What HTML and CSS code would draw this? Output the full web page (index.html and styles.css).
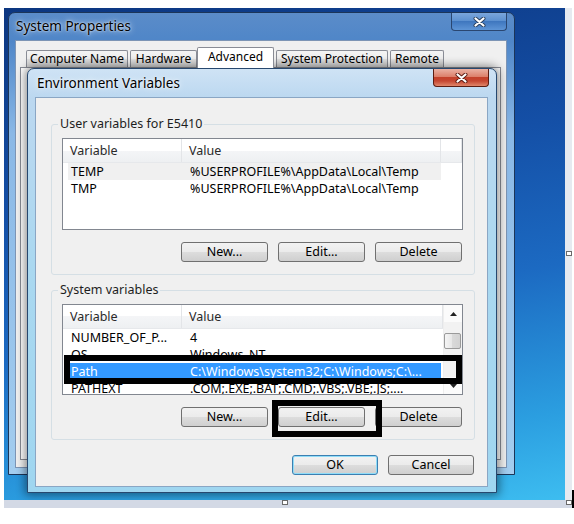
FILE: index.html
```html
<!DOCTYPE html>
<html>
<head>
<meta charset="utf-8">
<title>Environment Variables</title>
<link rel="stylesheet" href="styles.css">
</head>
<body>
<div class="page">
  <div class="screen">
    <div class="desktop">
      <div class="win sysprops">
        <div class="titlebar">
          <span class="wtitle">System Properties</span>
          <span class="close inactive"><svg width="13" height="10" viewBox="0 0 13 10"><path d="M2.5 1.5 L10.5 8.5 M10.5 1.5 L2.5 8.5" stroke="#2a3f5c" stroke-width="4" stroke-linecap="round"/><path d="M2.5 1.5 L10.5 8.5 M10.5 1.5 L2.5 8.5" stroke="#fff" stroke-width="2.2" stroke-linecap="round"/></svg></span>
        </div>
        <div class="sbody">
          <div class="tabs">
            <span class="tab t-cn">Computer Name</span>
            <span class="tab t-hw">Hardware</span>
            <span class="tab sel t-adv">Advanced</span>
            <span class="tab t-sp">System Protection</span>
            <span class="tab t-rm">Remote</span>
          </div>
          <div class="tabpage"></div>
        </div>
      </div>

      <div class="win envvars">
        <div class="titlebar etitle">
          <span class="wtitle">Environment Variables</span>
          <span class="close red"><svg width="13" height="10" viewBox="0 0 13 10"><path d="M2.5 1.5 L10.5 8.5 M10.5 1.5 L2.5 8.5" stroke="#5a1a10" stroke-width="4" stroke-linecap="round"/><path d="M2.5 1.5 L10.5 8.5 M10.5 1.5 L2.5 8.5" stroke="#fff" stroke-width="2.2" stroke-linecap="round"/></svg></span>
        </div>
        <div class="ebody">
          <fieldset class="group">
            <legend>User variables for E5410</legend>
            <div class="list ulist">
              <div class="lhead uhead"><span>Variable</span><span>Value</span><span></span></div>
              <div class="row hover"><span>TEMP</span><span>%USERPROFILE%\AppData\Local\Temp</span></div>
              <div class="row"><span>TMP</span><span>%USERPROFILE%\AppData\Local\Temp</span></div>
            </div>
            <div class="btns">
              <button class="btn">New...</button>
              <button class="btn">Edit...</button>
              <button class="btn">Delete</button>
            </div>
          </fieldset>

          <fieldset class="group sysgroup">
            <legend>System variables</legend>
            <div class="list slist">
              <div class="lmain">
                <div class="lhead shead"><span>Variable</span><span>Value</span></div>
                <div class="row"><span>NUMBER_OF_P...</span><span>4</span></div>
                <div class="row"><span>OS</span><span>Windows_NT</span></div>
                <div class="row sel"><span>Path</span><span>C:\Windows\system32;C:\Windows;C:\...</span></div>
                <div class="row"><span>PATHEXT</span><span>.COM;.EXE;.BAT;.CMD;.VBS;.VBE;.JS;....</span></div>
              </div>
              <div class="vscroll">
                <div class="arrow"><svg width="7" height="4" viewBox="0 0 7 4"><path d="M0 4 L3.5 0 L7 4 Z" fill="#222"/></svg></div>
                <div class="thumb"></div>
                <div class="arrow down"><svg width="7" height="4" viewBox="0 0 7 4"><path d="M0 0 L3.5 4 L7 0 Z" fill="#222"/></svg></div>
              </div>
            </div>
            <div class="btns">
              <button class="btn">New...</button>
              <button class="btn">Edit...</button>
              <button class="btn">Delete</button>
            </div>
          </fieldset>

          <div class="btns okrow">
            <button class="btn ok">OK</button>
            <button class="btn cancel">Cancel</button>
          </div>

          <div class="mark mark-path"></div>
          <div class="mark mark-edit"></div>
        </div>
      </div>
    </div>
    <div class="edge"></div>
    <div class="taskbar"></div>
  </div>
  <span class="handle h1"></span>
  <span class="handle h2"></span>
  <span class="handle h3"></span>
  <span class="caret"></span>
</div>
</body>
</html>
```

FILE: styles.css
```css
* { box-sizing: border-box; }

body {
  margin: 0;
  background-color: #ffffff;
  font-family: "Noto Sans", "Open Sans", sans-serif;
  font-size: 12.5px;
  color: #000000;
}

.page {
  position: relative;
  width: 574px;
  height: 524px;
  padding: 8px 0 0 4px;
}

.screen {
  display: grid;
  grid-template-columns: 561px 7px;
  grid-template-rows: 492px 8px;
  width: 568px;
  height: 500px;
  background-color: #1d64bd;
}

.desktop {
  position: relative;
  width: 561px;
  height: 492px;
  overflow: hidden;
  background-color: #1d64bd;
  box-shadow: inset 0 0 0 300px #1d64bd;
}

.desktop::before {
  content: "";
  position: absolute;
  left: 0;
  top: 0;
  width: 561px;
  height: 492px;
  background-image: linear-gradient(170deg, #0c3680 0%, #144fa6 35%, #1c6ac2 60%, #2b9ee0 85%, #3dbdf0 100%);
}

.edge {
  background-color: #e6eaf0;
}

.taskbar {
  grid-column: 1 / span 2;
  background-color: #d3d9e5;
}

/* windows */
.win {
  position: absolute;
  display: flex;
  flex-direction: column;
}

.titlebar {
  display: flex;
  justify-content: space-between;
  align-items: flex-start;
}

.wtitle {
  font-size: 13.5px;
  line-height: 16px;
  text-shadow: 0 0 6px rgba(255, 255, 255, 0.9), 0 0 2px rgba(255, 255, 255, 0.9);
}

.close {
  width: 56px;
  height: 18px;
  display: flex;
  align-items: center;
  justify-content: center;
  border-radius: 0 0 4px 4px;
}

.close.inactive {
  border: 1px solid #2a4670;
  border-top: none;
  background-color: #5a8fcf;
  background-image: linear-gradient(#7aa6dc, #5a8fcf 50%, #3f77bf 50%, #5e95d6);
}

.close.red {
  border: 1px solid #5c1d12;
  border-top: none;
  background-color: #c84a34;
  background-image: linear-gradient(#eab1a3 0%, #dc806b 45%, #c3412b 50%, #c54631 70%, #e0866a 100%);
}

/* System Properties */
.sysprops {
  left: 4px;
  top: 4px;
  width: 507px;
  height: 463px;
  border: 1px solid #1c3558;
  border-radius: 7px 7px 0 0;
  background-color: #6d9fd8;
  background-image: linear-gradient(180deg, #5b8cc9 0px, #4f86c8 28px, #8ab8e6 120px, #a3cdef 100%);
}

.sysprops .titlebar {
  height: 27px;
  padding-left: 7px;
  padding-right: 7px;
}

.sysprops .wtitle {
  margin-top: 5px;
}

.sbody {
  margin: 0 7px 6px 6px;
  height: 428px;
  background-color: #f0f0f0;
  border: 1px solid #7d95b5;
  padding-top: 6px;
  display: flex;
  flex-direction: column;
}

.tabs {
  display: flex;
  align-items: flex-end;
  height: 21px;
  padding-left: 10px;
}

.tab {
  height: 18px;
  border: 1px solid #898c95;
  border-bottom: none;
  border-radius: 2px 2px 0 0;
  background-color: #e4e4e4;
  background-image: linear-gradient(#f4f4f4, #ececec 50%, #dedede 50%, #d2d2d2);
  text-align: center;
  line-height: 16px;
  font-size: 12px;
  margin-right: 2px;
  white-space: nowrap;
}

.tab.sel {
  position: relative;
  z-index: 1;
  height: 21px;
  background-image: none;
  background-color: #ffffff;
  margin-left: -2px;
  margin-right: 2px;
  line-height: 18px;
}

.t-cn { width: 102px; }
.t-hw { width: 67px; }
.t-adv { width: 77px; }
.t-sp { width: 112px; }
.t-rm { width: 54px; }

.tabpage {
  flex: 1;
  margin: -1px 5px 7px 4px;
  background-color: #ffffff;
  border: 1px solid #898c95;
}

/* Environment Variables */
.envvars {
  left: 23px;
  top: 60px;
  width: 470px;
  height: 425px;
  border: 1px solid #27486f;
  border-radius: 7px 7px 0 0;
  background-color: #b4d9f1;
  background-image: linear-gradient(180deg, #cfe3f5 0px, #bcd8f0 28px, #aad8f0 200px, #9fd6f0 100%);
  box-shadow: 0 0 10px 2px rgba(0, 0, 0, 0.45);
}

.etitle {
  height: 28px;
  padding-left: 9px;
  padding-right: 7px;
}

.etitle .wtitle {
  margin-top: 6px;
}

.ebody {
  position: relative;
  margin: 0 8px 5px 7px;
  height: 390px;
  background-color: #f0f0f0;
  border: 1px solid #8aa6c4;
  padding: 18px 12px 0 15px;
}

.group {
  margin: 0;
  min-width: 0;
  border: 1px solid #d5dfe5;
  border-radius: 3px;
  padding: 6px 11px 12px 10px;
}

.group legend {
  padding: 0 2px;
  margin-left: -4px;
  line-height: 16px;
  font-size: 12.5px;
  color: #1e1e1e;
}

.sysgroup {
  margin-top: 7px;
}

.list {
  border: 1px solid #828790;
  background-color: #ffffff;
  overflow: hidden;
}

.ulist {
  height: 92px;
}

.slist {
  height: 91px;
  display: flex;
}

.lmain {
  flex: 1;
  min-width: 0;
}

.lhead {
  display: grid;
  height: 24px;
  background-color: #f7f8f9;
  background-image: linear-gradient(#ffffff 0%, #ffffff 50%, #f4f5f7 50%, #eef0f2 100%);
  border-bottom: 1px solid #e6e8eb;
}

.uhead { grid-template-columns: 119px 259px 1fr; }
.shead { grid-template-columns: 119px 1fr; }

.lhead span {
  line-height: 23px;
  padding-left: 7px;
  border-right: 1px solid #e3e5e8;
  color: #2a2a2a;
}

.row {
  display: grid;
  grid-template-columns: 113px 1fr;
  height: 17px;
  margin-left: 5px;
  width: 373px;
  line-height: 17px;
  white-space: nowrap;
}

.row span {
  overflow: hidden;
  padding-left: 3px;
}

.row span + span {
  padding-left: 9px;
}

.row.hover {
  background-color: #f0f0f0;
}

.row.sel {
  background-color: #3399ff;
  color: #ffffff;
}

.vscroll {
  width: 19px;
  display: flex;
  flex-direction: column;
  background-color: #f2f2f2;
  border-left: 1px solid #eeeeee;
}

.arrow {
  height: 17px;
  display: flex;
  align-items: center;
  justify-content: center;
  background-color: #fbfbfb;
}

.arrow.down {
  margin-top: auto;
}

.thumb {
  margin: 11px 1px 0 0;
  height: 16px;
  border: 1px solid #9a9a9a;
  border-radius: 2px;
  background-color: #e0e0e0;
  background-image: linear-gradient(90deg, #f5f5f5, #e6e6e6 50%, #d9d9d9 50%, #d2d2d2);
}

.btns {
  display: flex;
  justify-content: flex-end;
  gap: 10px;
  margin-top: 12px;
  padding-right: 1px;
}

.btn {
  width: 87px;
  height: 20px;
  padding: 0;
  border: 1px solid #707070;
  border-radius: 3px;
  background-color: #e3e3e3;
  background-image: linear-gradient(#f2f2f2 0%, #ebebeb 49%, #dddddd 50%, #cfcfcf 100%);
  font-family: "Noto Sans", "Open Sans", sans-serif;
  font-size: 12.5px;
  line-height: 18px;
  color: #000000;
}

.okrow {
  margin-top: 15px;
}

.okrow .btn {
  width: 86px;
}

.btn.ok {
  border-color: #3c7fb1;
  box-shadow: inset 0 0 0 1px #8fdcf8;
}

/* annotation rectangles drawn over the dialog */
.mark {
  position: absolute;
  border: 6px solid #000000;
}

.mark-path {
  left: 28px;
  top: 257px;
  width: 398px;
  height: 29px;
}

.mark-edit {
  left: 236px;
  top: 302px;
  width: 110px;
  height: 37px;
}

/* image selection handles over the screenshot */
.handle {
  position: absolute;
  width: 6px;
  height: 5px;
  border: 1px solid #6a6a6a;
  background-color: #ffffff;
}

.h1 { left: 282px; top: 500px; }
.h2 { left: 566px; top: 500px; }
.h3 { left: 566px; top: 251px; }

.caret {
  position: absolute;
  left: 572px;
  top: 490px;
  width: 2px;
  height: 18px;
  background-color: #000000;
}
```
